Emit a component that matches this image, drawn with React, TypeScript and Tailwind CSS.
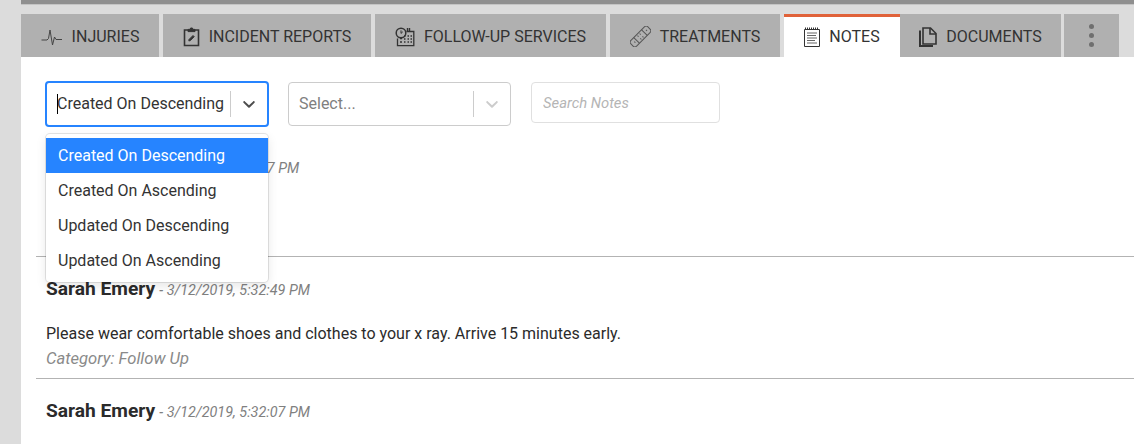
const tabBase = "flex h-[43px] items-center justify-center gap-[9px] bg-[#b0b0b0] pt-[2px] text-[16px] text-[#333]";

function PulseIcon() {
  return (
    <svg width="22" height="20" viewBox="0 0 22 20" fill="none" stroke="#444" strokeWidth="1">
      <path d="M0.5 13h5.5l1.5-1.5 1.5-8.500 2.500 15 2-8 1.500 2.500h6" />
    </svg>
  );
}

function ClipboardIcon() {
  return (
    <svg width="17" height="20" viewBox="0 0 17 20" fill="none" stroke="#333" strokeWidth="1.6">
      <path d="M5 3H1.500v15.500h14V3H12" />
      <path d="M5 4.600V2.400h2l.6-1.400h1.800l.6 1.400h2v2.200z" fill="#333" strokeWidth="1" />
      <path d="M5.800 14l.2-1.600 4-4 1.300 1.300-4 4z" fill="#333" strokeWidth="0.8" />
    </svg>
  );
}

function CalendarClockIcon() {
  return (
    <svg width="20" height="20" viewBox="0 0 20 20" fill="none" stroke="#333" strokeWidth="1.2">
      <circle cx="6" cy="6" r="4.800" strokeWidth="1.500" />
      <path d="M6 3.400V6.400L7.800 4.800" strokeWidth="1" />
      <path d="M11.500 4.500H18.800V18.600H2.500V11.500" strokeWidth="1.300" />
      <path d="M14.500 1v4M12.500 1v4" strokeWidth="1.400" />
      <path d="M5 11.500h2M9 9h1.500M12.500 9h1.500M15.500 9h1.500M9 12h1.500M12.500 12h1.500M15.500 12h1.500M5 15h2M9 15h1.500M12.500 15h1.500M15.500 15h1.500" strokeWidth="1.600" />
    </svg>
  );
}

function BandageIcon() {
  return (
    <svg width="21" height="21" viewBox="0 0 21 21" fill="none" stroke="#555" strokeWidth="1">
      <g transform="rotate(-45 10.500 10.500)">
        <rect x="-1.500" y="6.500" width="24" height="8" rx="2.500" />
        <path d="M5 6.500v8M16 6.500v8" />
        <path d="M8.500 8.500h1M11.500 8.500h1M8.500 12.500h1M11.500 12.500h1M2 10.500h1M18.500 10.500h1" strokeWidth="1.500" />
      </g>
    </svg>
  );
}

function NotepadIcon() {
  return (
    <svg width="16" height="20" viewBox="0 0 16 20" fill="none" stroke="#333" strokeWidth="1">
      <path d="M.5 2.500h15v17H.5z" />
      <path d="M1 1.500h14" strokeDasharray="1 1" strokeWidth="2" />
      <path d="M3 6h10M3 8.500h9M3 11h10M3 13.500h8M3 16h10" stroke="#666" strokeWidth="1.200" />
    </svg>
  );
}

function DocumentsIcon() {
  return (
    <svg width="18" height="20" viewBox="0 0 18 20" fill="none" stroke="#333" strokeWidth="1.600">
      <path d="M4 1h7.500L17 6.500V17H4z" />
      <path d="M11 1v6h6" />
      <path d="M1 3.500V19h13" strokeWidth="2" />
    </svg>
  );
}

function Chevron({ color }: { color: string }) {
  return (
    <svg width="20" height="20" viewBox="0 0 20 20" fill={color}>
      <path d="M4.500 7.400c.4-.4 1-.4 1.400 0L10 11.300l4.100-3.900c.4-.4 1-.4 1.400 0 .4.4.4 1 0 1.400l-4.800 4.600c-.4.4-1 .4-1.400 0L4.500 8.800c-.4-.4-.4-1 0-1.400z" />
    </svg>
  );
}

function Note({ name, stamp, body, category }: { name: string; stamp: string; body?: string; category?: string }) {
  return (
    <div className="h-[122px] border-b border-[#b3b3b3] pl-[10px] pt-[20px]">
      <div className="flex h-[24px] items-center">
        <span className="text-[19.2px] font-bold text-[#2b2b2b]">{name}</span>
        <span className="ml-[4px] mt-[3px] text-[14.4px] italic text-[#808080]">- {stamp}</span>
      </div>
      {body && <p className="mt-[21px] h-[24px] text-[16px] leading-[24px] text-[#2b2b2b]">{body}</p>}
      {category && <p className="mt-[1px] h-[24px] text-[16.6px] italic leading-[24px] text-[#8a8a8a]">{category}</p>}
    </div>
  );
}

export default function App() {
  const options = ["Created On Descending", "Created On Ascending", "Updated On Descending", "Updated On Ascending"];

  return (
    <div className="h-[444px] w-[1134px] overflow-hidden bg-[#dcdcdc] pl-[21px] font-['Roboto',sans-serif]">
      <div className="h-[4px] bg-[#8f8f8f]" />
      <div className="h-[1px] bg-[#c4c4c4]" />

      <div className="mt-[9px] flex h-[43px]">
        <div className={`${tabBase} w-[138px]`}><PulseIcon />INJURIES</div>
        <div className={`${tabBase} ml-[4px] w-[208px]`}><ClipboardIcon />INCIDENT REPORTS</div>
        <div className={`${tabBase} ml-[4px] w-[231px]`}><CalendarClockIcon />FOLLOW-UP SERVICES</div>
        <div className={`${tabBase} ml-[4px] w-[170px]`}><BandageIcon />TREATMENTS</div>
        <div className="ml-[4px] flex h-[43px] w-[116px] items-center justify-center gap-[9px] border-t-[3px] border-[#e0623a] bg-white text-[16px] text-[#333]"><NotepadIcon />NOTES</div>
        <div className={`${tabBase} w-[161px]`}><DocumentsIcon />DOCUMENTS</div>
        <div className="ml-[3px] flex h-[43px] w-[55px] flex-col items-center justify-center gap-[4px] bg-[#b0b0b0]">
          <span className="size-[5px] rounded-full bg-[#6f6f6f]" />
          <span className="size-[5px] rounded-full bg-[#6f6f6f]" />
          <span className="size-[5px] rounded-full bg-[#6f6f6f]" />
        </div>
      </div>

      <div className="relative h-[387px] bg-white pl-[15px]">
        <div className="flex items-start pl-[9px] pt-[24px]">
          <div className="flex h-[46px] w-[224px] items-center rounded-[4px] border-2 border-[#2684ff] pl-[10px]">
            <span className="relative text-[16px] whitespace-nowrap text-[#333]">
              <span className="absolute left-0 top-[2px] h-[20px] w-px bg-black" />
              Created On Descending
            </span>
            <span className="ml-[6px] h-[26px] w-px shrink-0 bg-[#cccccc]" />
            <span className="ml-[8px] shrink-0"><Chevron color="#4d4d4d" /></span>
          </div>
          <div className="ml-[19px] mt-[1px] flex h-[44px] w-[223px] items-center rounded-[4px] border border-[#cccccc] pl-[10px]">
            <span className="w-[174px] text-[16px] text-[#808080]">Select...</span>
            <span className="h-[26px] w-px bg-[#cccccc]" />
            <span className="ml-[8px]"><Chevron color="#cccccc" /></span>
          </div>
          <input
            readOnly
            placeholder="Search Notes"
            className="ml-[20px] mt-[1px] h-[41px] w-[189px] rounded-[4px] border border-[#e0e0e0] px-[11px] text-[14.8px] italic outline-none placeholder:text-[#b5b5b5]"
          />
        </div>

        <div className="mt-[8px]">
          <Note name="Sara Emery" stamp="3/12/2019, 5:32:07 PM" />
          <Note name="Sarah Emery" stamp="3/12/2019, 5:32:49 PM" body="Please wear comfortable shoes and clothes to your x ray. Arrive 15 minutes early." category="Category: Follow Up" />
          <Note name="Sarah Emery" stamp="3/12/2019, 5:32:07 PM" />
        </div>

        <div className="absolute left-[25px] top-[77px] w-[222px] overflow-hidden rounded-[4px] bg-white py-[4px] shadow-[0_0_0_1px_rgba(0,0,0,0.1),0_4px_11px_rgba(0,0,0,0.1)]">
          {options.map((option, i) => (
            <div
              key={option}
              className={i === 0
                ? "flex h-[35px] items-center bg-[#2684ff] px-[12px] text-[16px] text-white"
                : "flex h-[35px] items-center px-[12px] text-[16px] text-[#333]"}
            >
              {option}
            </div>
          ))}
        </div>
      </div>
    </div>
  );
}
